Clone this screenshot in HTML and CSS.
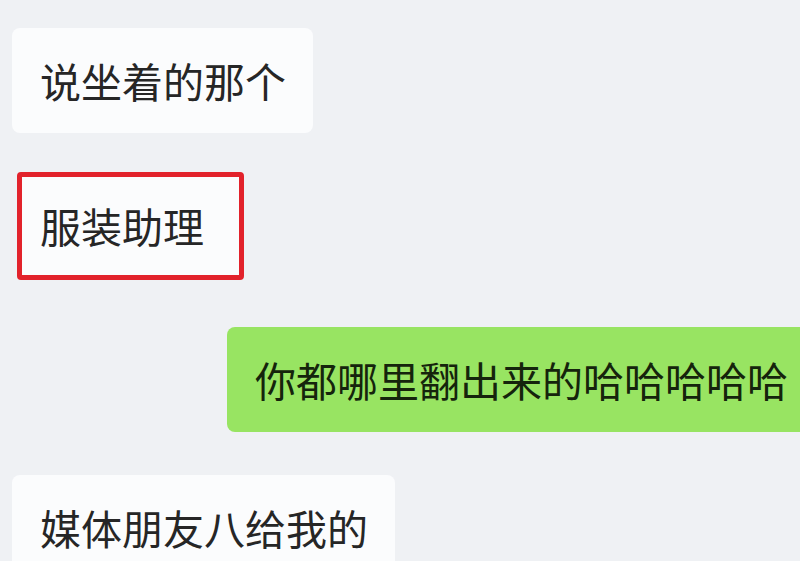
FILE: index.html
```html
<!DOCTYPE html>
<html lang="zh-CN">
<head>
<meta charset="utf-8">
<title>聊天</title>
<link rel="stylesheet" href="styles.css">
</head>
<body>
<main class="chat">
  <div class="row row-1"><div class="bubble">说坐着的那个</div></div>
  <div class="row row-2"><div class="bubble bubble-marked">服装助理</div></div>
  <div class="row row-3"><div class="bubble bubble-mine">你都哪里翻出来的哈哈哈哈哈</div></div>
  <div class="row row-4"><div class="bubble">媒体朋友八给我的</div></div>
</main>
</body>
</html>
```
FILE: styles.css
```css
html, body {
  margin: 0;
  padding: 0;
  overflow: hidden;
  background: #eff1f4;
  width: 800px;
  height: 561px;
}
.chat {
  display: flex;
  flex-direction: column;
  padding-top: 28px;
  font-family: "Noto Sans CJK SC", "Noto Sans", sans-serif;
}
.row {
  display: flex;
  white-space: nowrap;
}
.bubble {
  font-size: 41px;
  line-height: 57px;
  color: #262626;
  background: #fbfcfd;
  border-radius: 8px;
  padding: 24px 27px 24px 28px;
}
.row-1 { padding-left: 12px; }
.row-2 { padding-left: 17px; margin-top: 39px; }
.row-3 { padding-left: 227px; margin-top: 47px; }
.row-4 { padding-left: 12px; margin-top: 43px; }
.bubble-marked {
  border: 5px solid #e2222b;
  border-radius: 4px;
  padding: 20px 35px 21px 18px;
}
.bubble-mine {
  background: #98e462;
  color: #15240c;
}
```
